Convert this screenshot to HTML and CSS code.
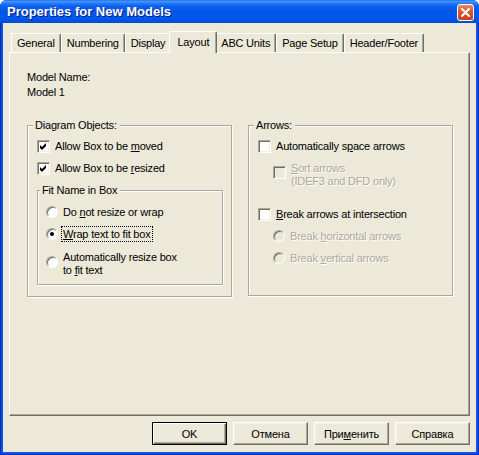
FILE: index.html
```html
<!DOCTYPE html>
<html>
<head>
<meta charset="utf-8">
<link rel="stylesheet" href="styles.css">
</head>
<body>
<div class="window">
  <div class="titlebar">
    <span class="title">Properties for New Models</span>
    <span class="close"><svg width="9" height="9" viewBox="0 0 9 9"><path d="M1 1L8 8M8 1L1 8" stroke="#fff" stroke-width="2" stroke-linecap="square"/></svg></span>
  </div>
  <div class="client">
    <div class="tabs">
      <div class="tab">General</div>
      <div class="tab">Numbering</div>
      <div class="tab">Display</div>
      <div class="tab active">Layout</div>
      <div class="tab">ABC Units</div>
      <div class="tab">Page Setup</div>
      <div class="tab">Header/Footer</div>
    </div>
    <div class="panel">
      <div class="label">Model Name:</div>
      <div class="label">Model 1</div>
      <div class="groups">
        <fieldset class="group">
          <legend>Diagram Objects:</legend>
          <div class="row"><span class="cb"><svg width="11" height="11" viewBox="0 0 11 11"><polygon points="2,4 4,6 8,2 8,5 4,9 2,7" fill="#000"/></svg></span><span>Allow Box to be <u>m</u>oved</span></div>
          <div class="row"><span class="cb"><svg width="11" height="11" viewBox="0 0 11 11"><polygon points="2,4 4,6 8,2 8,5 4,9 2,7" fill="#000"/></svg></span><span>Allow Box to be <u>r</u>esized</span></div>
          <fieldset class="group inner">
            <legend>Fit Name in Box</legend>
            <div class="row"><span class="radio"></span><span>Do <u>n</u>ot resize or wrap</span></div>
            <div class="row"><span class="radio on"></span><span class="focus"><u>W</u>rap text to fit box</span></div>
            <div class="row multi"><span class="radio"></span><span class="two">Automatically resize box<br>to <u>f</u>it text</span></div>
          </fieldset>
        </fieldset>
        <fieldset class="group">
          <legend>Arrows:</legend>
          <div class="row"><span class="cb"></span><span>Automatically s<u>p</u>ace arrows</span></div>
          <div class="row sort disabled"><span class="cb"></span><span class="two"><u>S</u>ort arrows<br>(IDEF3 and DFD only)</span></div>
          <div class="row"><span class="cb"></span><span><u>B</u>reak arrows at intersection</span></div>
          <div class="row sub disabled"><span class="radio"></span><span>Break <u>h</u>orizontal arrows</span></div>
          <div class="row sub disabled"><span class="radio"></span><span>Break <u>v</u>ertical arrows</span></div>
        </fieldset>
      </div>
    </div>
    <div class="buttons">
      <button class="btn default">OK</button>
      <button class="btn">Отмена</button>
      <button class="btn">При<u>м</u>енить</button>
      <button class="btn">Справка</button>
    </div>
  </div>
</div>
</body>
</html>
```
FILE: styles.css
```css
* { box-sizing: border-box; }
html, body { margin: 0; padding: 0; background: #ffffff; }
body {
  font-family: "Liberation Sans", Arial, sans-serif;
  font-size: 11px;
  letter-spacing: -0.2px;
  color: #000;
}
.window {
  width: 479px;
  height: 455px;
  display: flex;
  flex-direction: column;
  background: #0855E6;
  border-radius: 7px 7px 0 0;
  overflow: hidden;
  box-shadow: inset 1px 0 #0030B8, inset -1px 0 #0030B8, inset 0 -1px #0030B8;
}
.titlebar {
  height: 23px;
  flex: none;
  display: flex;
  align-items: center;
  padding: 0 5px 0 7px;
  background: linear-gradient(180deg, #0A5DF0 0px, #4A9CFF 1px, #2D80F9 3px, #0E60EF 6px, #0055E8 12px, #0058EE 18px, #0050DC 22px, #0046C8 23px);
  color: #fff;
}
.title {
  flex: 1;
  font-weight: bold;
  font-size: 13px;
  letter-spacing: 0;
  text-shadow: 1px 1px #0A1883;
}
.close {
  width: 17px;
  height: 17px;
  margin-top: 2px;
  border: 1px solid #fff;
  border-radius: 3px;
  background: linear-gradient(180deg, #E98A63 0%, #D8582F 45%, #C8421C 100%);
  display: flex;
  align-items: center;
  justify-content: center;
}
.client {
  flex: 1;
  margin: 0 3px 3px;
  background: #ECE9D8;
  display: flex;
  flex-direction: column;
}
.tabs {
  display: flex;
  align-items: flex-end;
  height: 21px;
  margin: 8px 0 0 8px;
  position: relative;
  z-index: 1;
}
.tab {
  height: 19px;
  padding: 0 5px;
  display: flex;
  align-items: center;
  background: #ECE9D8;
  border-top: 1px solid #fff;
  border-left: 1px solid #fff;
  border-right: 1px solid #716F64;
  box-shadow: inset -1px 0 #ACA899;
  border-radius: 2px 2px 0 0;
}
.tab.active {
  height: 22px;
  margin: 0 -2px -1px;
  padding: 0 7px 2px;
  position: relative;
  z-index: 2;
}
.panel {
  width: 461px;
  height: 364px;
  margin-left: 6px;
  flex: none;
  border: 1px solid;
  border-color: #fff #716F64 #716F64 #fff;
  box-shadow: inset -1px -1px #ACA899;
  padding: 17px 0 0 17px;
}
.label { line-height: 15px; }
.groups {
  display: flex;
  align-items: flex-start;
  gap: 16px;
  margin-top: 19px;
}
.group {
  width: 205px;
  margin: 0;
  padding: 3px 7px 11px 9px;
  border: 1px solid #ACA899;
  box-shadow: inset 1px 1px #fff, 1px 1px #fff;
  min-width: 0;
}
.group > legend {
  line-height: 13px;
  padding: 0 3px 0 2px;
  margin-left: -4px;
  background: #ECE9D8;
}
.group + .group { padding-bottom: 26px; }
.group.inner {
  width: 186px;
  margin-top: 5px;
  padding: 4px 6px 0 8px;
}
.group.inner > legend { margin-left: -6px; }
.row {
  display: flex;
  align-items: center;
  height: 22px;
  line-height: 13px;
  white-space: nowrap;
}
.row.multi {
  height: 39px;
  align-items: flex-start;
}
.row.multi .radio { margin-top: 11px; }
.row.multi .two { margin-top: 6px; }
.row.sort {
  height: 46px;
  align-items: flex-start;
  padding-left: 15px;
}
.row.sort .cb { margin-top: 9px; }
.row.sort .two { margin-top: 5px; }
.row.sub { padding-left: 15px; }
.cb {
  flex: none;
  width: 13px;
  height: 13px;
  margin-right: 5px;
  border: 1px solid;
  border-color: #ACA899 #fff #fff #ACA899;
  box-shadow: inset 1px 1px #716F64, inset -1px -1px #F1EFE2;
  background: #fff;
  display: flex;
}
.radio {
  flex: none;
  width: 12px;
  height: 12px;
  margin-right: 5px;
  border-radius: 50%;
  border: 1px solid;
  border-color: #ACA899 #fff #fff #ACA899;
  box-shadow: inset 1px 1px #716F64;
  background: #fff;
  display: flex;
  align-items: center;
  justify-content: center;
}
.radio.on::after {
  content: "";
  width: 4px;
  height: 4px;
  border-radius: 50%;
  background: #000;
}
.focus {
  outline: 1px dotted #000;
  padding: 0 1px;
  line-height: 14px;
  margin-left: -1px;
}
.disabled { color: #ACA899; text-shadow: 1px 1px #fff; }
.disabled .cb, .disabled .radio { background: #ECE9D8; }
.buttons {
  display: flex;
  justify-content: flex-end;
  gap: 6px;
  margin: 6px 6px 0 0;
}
.btn {
  width: 75px;
  height: 23px;
  padding: 0;
  font: inherit;
  letter-spacing: inherit;
  color: #000;
  background: #ECE9D8;
  border: 1px solid;
  border-color: #fff #716F64 #716F64 #fff;
  box-shadow: inset -1px -1px #ACA899, inset 1px 1px #F1EFE2;
}
.btn.default {
  border: 1px solid #000;
  box-shadow: inset 1px 1px #fff, inset -1px -1px #716F64, inset -2px -2px #ACA899;
}
```
